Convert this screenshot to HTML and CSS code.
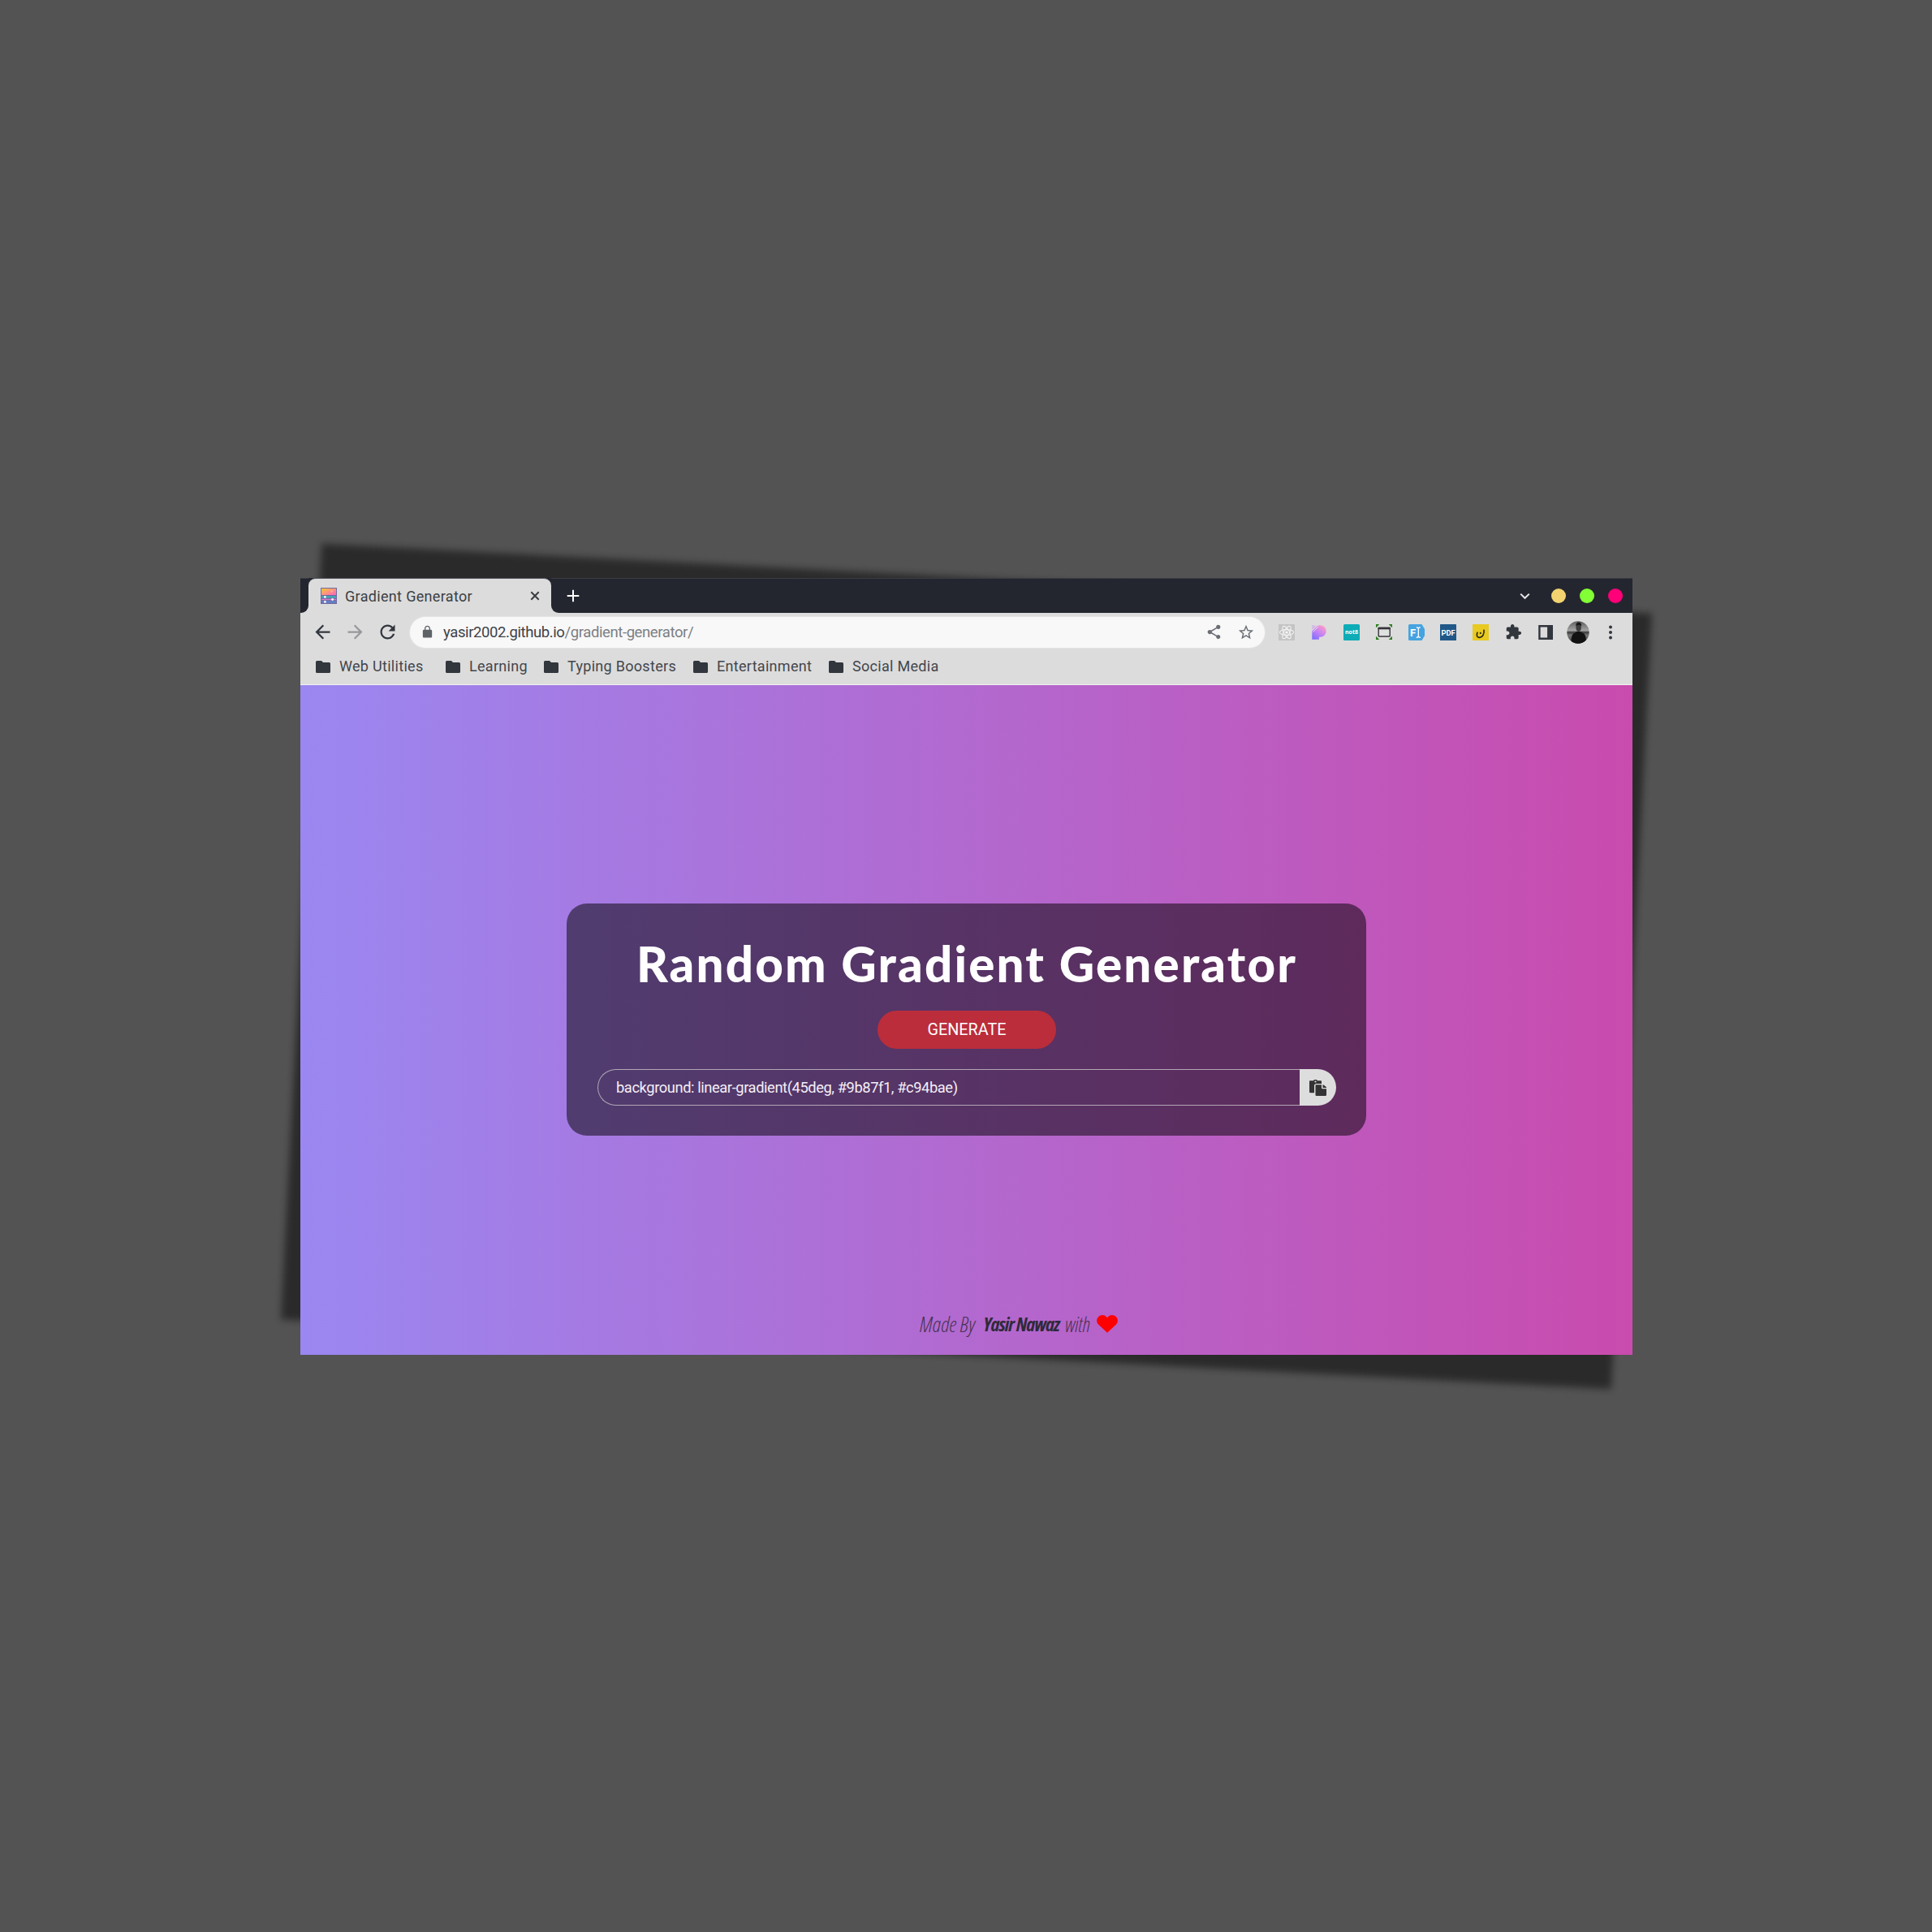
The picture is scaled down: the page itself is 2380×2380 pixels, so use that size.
FILE: index.html
```html
<!DOCTYPE html>
<html lang="en">
<head>
<meta charset="utf-8">
<title>Gradient Generator</title>
<link rel="stylesheet" href="styles.css">
</head>
<body>
<main class="stage">
<div class="frame">
<section class="window">
  <header class="tabstrip">
    <div class="strip-left"></div>
    <div class="tab-slot">
      <div class="tab">
        <svg class="favicon" viewBox="0 0 20 20"><defs><linearGradient id="fav" x1="0" y1="0" x2="1" y2="1"><stop offset="0" stop-color="#fbc72f"/><stop offset=".55" stop-color="#ff8f86"/><stop offset="1" stop-color="#fd62c0"/></linearGradient></defs><rect width="20" height="20" fill="#6f6ba0"/><rect x="1" y="1" width="18" height="8" fill="url(#fav)"/><circle cx="13.6" cy="4.6" r="1" fill="#ffc0b0"/><path d="M1 11.4h18" stroke="#2cc3c0" stroke-width="1.6"/><path d="M1 14.5h18" stroke="#d77bd0" stroke-width="1.4"/><path d="M1 17.5h18" stroke="#5c8ae0" stroke-width="1.6"/><circle cx="5.4" cy="11.4" r="1.4" fill="#fff"/><circle cx="14.6" cy="14.5" r="1.4" fill="#fff"/><circle cx="5.4" cy="17.4" r="1.4" fill="#fff"/></svg>
        <span class="tab-title">Gradient Generator</span>
        <svg class="tab-close" viewBox="0 0 12 12"><path d="M1.3 1.3l9.4 9.4M10.7 1.3l-9.4 9.4" stroke="#3a3d42" stroke-width="2" fill="none"/></svg>
      </div>
    </div>
    <div class="strip-right">
      <svg class="plus" viewBox="0 0 16 16"><path d="M8 .7v14.6M.7 8h14.6" stroke="#fff" stroke-width="2"/></svg>
      <svg class="chevron" viewBox="0 0 14 9"><path d="M1.3 1.4L7 7l5.7-5.6" stroke="#e6e6e8" stroke-width="2.2" fill="none"/></svg>
      <i class="dot yellow"></i><i class="dot green"></i><i class="dot pink"></i>
    </div>
  </header>
  <nav class="toolbar">
    <span class="cell"><svg class="i27 dark" viewBox="0 0 24 24"><path d="M20 11H7.83l5.59-5.59L12 4l-8 8 8 8 1.41-1.41L7.83 13H20v-2z"/></svg></span>
    <span class="cell"><svg class="i27 faded" viewBox="0 0 24 24"><path d="M12 4l-1.41 1.41L16.17 11H4v2h12.17l-5.58 5.59L12 20l8-8z"/></svg></span>
    <span class="cell"><svg class="i27 dark" viewBox="0 0 24 24"><path d="M17.65 6.35C16.2 4.9 14.21 4 12 4c-4.42 0-7.99 3.58-7.99 8s3.57 8 7.99 8c3.73 0 6.84-2.55 7.73-6h-2.08c-.82 2.33-3.04 4-5.65 4-3.31 0-6-2.69-6-6s2.69-6 6-6c1.66 0 3.14.69 4.22 1.78L13 11h7V4l-2.35 2.35z"/></svg></span>
    <div class="omnibox">
      <svg class="lock" viewBox="0 0 24 24"><path d="M18 8h-1V6c0-2.76-2.24-5-5-5S7 3.24 7 6v2H6c-1.1 0-2 .9-2 2v10c0 1.1.9 2 2 2h12c1.1 0 2-.9 2-2V10c0-1.1-.9-2-2-2zM15.1 8H8.9V6c0-1.71 1.39-3.1 3.1-3.1s3.1 1.39 3.1 3.1v2z"/></svg>
      <span class="url">yasir2002.github.io<span class="path">/gradient-generator/</span></span>
      <svg class="share" viewBox="0 0 24 24"><path d="M18 16.08c-.76 0-1.44.3-1.96.77L8.91 12.7c.05-.23.09-.46.09-.7s-.04-.47-.09-.7l7.05-4.11c.54.5 1.25.81 2.04.81 1.66 0 3-1.34 3-3s-1.34-3-3-3-3 1.34-3 3c0 .24.04.47.09.7L8.04 9.81C7.5 9.31 6.79 9 6 9c-1.66 0-3 1.34-3 3s1.34 3 3 3c.79 0 1.5-.31 2.04-.81l7.12 4.16c-.05.21-.08.43-.08.65 0 1.61 1.31 2.92 2.92 2.92s2.92-1.31 2.92-2.92-1.31-2.92-2.92-2.92z"/></svg>
      <svg class="star" viewBox="0 0 24 24"><path d="M22 9.24l-7.19-.62L12 2 9.19 8.63 2 9.24l5.46 4.73L5.82 21 12 17.27 18.18 21l-1.63-7.03L22 9.24zM12 15.4l-3.76 2.27 1-4.28-3.32-2.88 4.38-.38L12 6.1l1.71 4.04 4.38.38-3.32 2.88 1 4.28L12 15.4z"/></svg>
    </div>
    <div class="extensions">
      <span class="cell"><svg class="i20" viewBox="0 0 20 20"><rect width="20" height="20" fill="#c4c4c4"/><g fill="none" stroke="#f2f2f2" stroke-width="1.1"><ellipse cx="10" cy="10" rx="8.6" ry="3.4"/><ellipse cx="10" cy="10" rx="8.6" ry="3.4" transform="rotate(60 10 10)"/><ellipse cx="10" cy="10" rx="8.6" ry="3.4" transform="rotate(120 10 10)"/></g><circle cx="10" cy="10" r="1.6" fill="#fff"/></svg></span>
      <span class="cell"><svg class="i20" viewBox="0 0 20 20"><defs><linearGradient id="pg" x1=".1" y1="1" x2=".8" y2="0"><stop offset="0" stop-color="#7a6cff"/><stop offset=".5" stop-color="#c583f3"/><stop offset="1" stop-color="#ff9dc4"/></linearGradient></defs><path d="M1.3 8.6L8.2 1.7Q9.5 1.3 11 1.3c4.6 0 7.7 3.2 7.7 7.3s-3.1 7.2-7.3 7.2H10V18.7H1.3z" fill="url(#pg)"/><path d="M1.4 5.6L5.4 1.6M1.4 2.6L2.6 1.4" stroke="#c99af0" stroke-width="1.3"/><path d="M2.5 9.5L9 3" stroke="#eadcf5" stroke-width=".9"/></svg></span>
      <span class="cell"><svg class="i20" viewBox="0 0 20 20"><rect width="20" height="20" rx="1.5" fill="#0eacb6"/><text x="10" y="12.4" text-anchor="middle" class="not8">not8</text></svg></span>
      <span class="cell"><svg class="i20" viewBox="0 0 20 20"><path d="M0 0h4.3L0 4.3zM20 0v4.3L15.7 0zM0 19v-4.3L4.3 19zM20 19h-4.3L20 14.7z" fill="#2b7d1d"/><rect x="3.2" y="4.4" width="14" height="10.6" rx=".8" fill="#dfe0e0" stroke="#35353a" stroke-width="1.4"/><path d="M2.5 5h15.4" stroke="#35353a" stroke-width="2.6"/></svg></span>
      <span class="cell"><svg class="i20" viewBox="0 0 20 20"><path d="M1.5 0H16.5L20 6v8l-3.5 6H1.5Q0 20 0 18.5v-17Q0 0 1.5 0z" fill="#45a3e0"/><text x="2" y="14.8" class="fi">F</text><path d="M9.8 3.8q1.600 0 2.500 1 .9-1 2.500-1M9.800 16.300q1.600 0 2.500-1 .9 1 2.500 1M12.300 4.800v10.500" fill="none" stroke="#fff" stroke-width="1.3"/></svg></span>
      <span class="cell"><svg class="i20" viewBox="0 0 20 20"><rect width="20" height="20" rx=".6" fill="#205888"/><text x="10" y="13.6" text-anchor="middle" class="pdf">PDF</text></svg></span>
      <span class="cell"><svg class="i20" viewBox="0 0 20 20"><rect width="20" height="20" fill="#e8ca20"/><path d="M6.2 9.6C4.3 13.5 5.5 16.4 8.4 16.3c4 0 6.5-4.5 5.500-9.700" fill="none" stroke="#2f2a10" stroke-width="1.7"/><path d="M9.7 9.6l1.5 1.4-1.3 1.3-1.4-1.4z" fill="#2f2a10"/></svg></span>
      <span class="cell"><svg class="i22 dark" viewBox="0 0 24 24"><path d="M20.5 11H19V7c0-1.1-.9-2-2-2h-4V3.5C13 2.12 11.88 1 10.5 1S8 2.12 8 3.5V5H4c-1.1 0-1.99.9-1.99 2v3.8H3.5c1.49 0 2.7 1.21 2.7 2.7s-1.21 2.7-2.7 2.7H2V20c0 1.1.9 2 2 2h3.8v-1.5c0-1.49 1.21-2.7 2.7-2.7 1.49 0 2.7 1.21 2.7 2.7V22H17c1.1 0 2-.9 2-2v-4h1.5c1.38 0 2.5-1.12 2.5-2.5S21.88 11 20.5 11z"/></svg></span>
      <span class="cell"><svg class="i20" viewBox="0 0 20 20"><path d="M1.2 1h17.8v18H1.2zM3.6 3.4v13.2h8.5V3.4z" fill="#32363d" fill-rule="evenodd"/></svg></span>
      <span class="cell"><svg class="avatar" viewBox="0 0 28 28"><defs><clipPath id="av"><circle cx="14" cy="14" r="13.7"/></clipPath><linearGradient id="sky" x1="0" y1="0" x2="0" y2="1"><stop offset="0" stop-color="#5c5c5c"/><stop offset=".42" stop-color="#a4a4a4"/><stop offset=".5" stop-color="#3a3a3a"/><stop offset=".62" stop-color="#777"/><stop offset="1" stop-color="#343434"/></linearGradient></defs><g clip-path="url(#av)"><rect width="28" height="28" fill="url(#sky)"/><path d="M5.5 28c0-7 .5-12 4.5-13.5l2.5-1.5h4l3 1.5c4 1.5 4.5 6.5 4.5 13.5z" fill="#121212"/><ellipse cx="14.6" cy="8" rx="3.3" ry="5" fill="#3d3d3d"/><path d="M11.3 6q0-4.5 3.5-4.5T18.2 6q-3-2-6.9 0z" fill="#181818"/></g></svg></span>
      <span class="cell"><svg class="i24 dark" viewBox="0 0 24 24"><circle cx="12" cy="5.5" r="2"/><circle cx="12" cy="12" r="2"/><circle cx="12" cy="18.5" r="2"/></svg></span>
    </div>
  </nav>
  <nav class="bookmarks">
    <span class="bm b1"><svg class="folder" viewBox="0 0 18 15"><path d="M1.5 0H7l2 2h7.5Q18 2 18 3.5v10Q18 15 16.5 15h-15Q0 15 0 13.5v-12Q0 0 1.5 0z"/></svg><span>Web Utilities</span></span>
    <span class="bm b2"><svg class="folder" viewBox="0 0 18 15"><path d="M1.5 0H7l2 2h7.5Q18 2 18 3.5v10Q18 15 16.5 15h-15Q0 15 0 13.5v-12Q0 0 1.5 0z"/></svg><span>Learning</span></span>
    <span class="bm b3"><svg class="folder" viewBox="0 0 18 15"><path d="M1.5 0H7l2 2h7.5Q18 2 18 3.5v10Q18 15 16.5 15h-15Q0 15 0 13.5v-12Q0 0 1.5 0z"/></svg><span>Typing Boosters</span></span>
    <span class="bm b4"><svg class="folder" viewBox="0 0 18 15"><path d="M1.5 0H7l2 2h7.5Q18 2 18 3.5v10Q18 15 16.5 15h-15Q0 15 0 13.5v-12Q0 0 1.5 0z"/></svg><span>Entertainment</span></span>
    <span class="bm"><svg class="folder" viewBox="0 0 18 15"><path d="M1.5 0H7l2 2h7.5Q18 2 18 3.5v10Q18 15 16.5 15h-15Q0 15 0 13.5v-12Q0 0 1.5 0z"/></svg><span>Social Media</span></span>
  </nav>
  <div class="page">
    <div class="card">
      <h1 class="title">Random Gradient Generator</h1>
      <button class="generate">GENERATE</button>
      <div class="output">
        <div class="code">background: linear-gradient(45deg, #9b87f1, #c94bae)</div>
        <button class="copy" aria-label="Copy"><svg viewBox="0 0 448 512" preserveAspectRatio="none"><path d="M128 184c0-30.879 25.122-56 56-56h136V56c0-13.255-10.745-24-24-24h-80.61C204.306 12.89 183.637 0 160 0s-44.306 12.89-55.39 32H24C10.745 32 0 42.745 0 56v336c0 13.255 10.745 24 24 24h104V184zm32-144c13.255 0 24 10.745 24 24s-10.745 24-24 24-24-10.745-24-24 10.745-24 24-24zm184 248h104v200c0 13.255-10.745 24-24 24H184c-13.255 0-24-10.745-24-24V184c0-13.255 10.745-24 24-24h136v104c0 13.2 10.8 24 24 24zm104-38.059V256h-96v-96h6.059a24 24 0 0 1 16.97 7.029l65.941 65.941a24 24 0 0 1 7.03 16.971z"/></svg></button>
      </div>
    </div>
    <footer class="credit">
      <span>Made By</span><strong>Yasir Nawaz</strong><span class="with">with</span>
      <svg class="heart" viewBox="0 0 26 22"><path d="M13 21.8L2 11.5C-.6 8.8-.4 4.5 2 2.2 5-.7 9.5-.5 12 2.2l1 1 1-1C16.500-.5 21-.7 24 2.2c2.4 2.3 2.6 6.6 0 9.3z" fill="#f00"/></svg>
    </footer>
  </div>
</section>
</div>
</main>
</body>
</html>
```
FILE: styles.css
```css
* { box-sizing: border-box; }
body { margin: 0; background: #535353; font-family: Roboto, sans-serif; }
svg { display: block; flex: none; }
button { border: 0; padding: 0; font-family: inherit; }
.stage { height: 2380px; padding: 712px 0 0 370px; overflow: hidden; }
.frame { position: relative; width: 1641px; height: 957px; }
.frame::before { content: ""; position: absolute; inset: 0; background: #2a2a2a; transform: rotate(3deg); filter: blur(5px); }
.window { position: relative; height: 957px; display: flex; flex-direction: column; background: #dcdcdc; }

.tabstrip { display: flex; height: 43px; }
.strip-left { width: 10px; background: #24262f; border-bottom-right-radius: 9px; border-top: 1px solid #3a3b43; }
.tab-slot { width: 299px; background: linear-gradient(#24262f 0 20px, #dcdcdc 20px); }
.tab { height: 43px; display: flex; align-items: center; padding: 0 14px 0 15px; background: #dcdcdc; border-radius: 9px 9px 0 0; border-top: 1px solid #55565c; }
.favicon { width: 20px; height: 20px; }
.tab-title { margin-left: 10px; font-size: 18px; letter-spacing: .33px; color: #3b3e44; white-space: nowrap; }
.tab-close { width: 12px; height: 12px; margin-left: auto; }
.strip-right { flex: 1; display: flex; align-items: center; padding: 0 12px 0 19px; background: #24262f; border-bottom-left-radius: 9px; border-top: 1px solid #3a3b43; }
.plus { width: 16px; height: 16px; }
.chevron { width: 13px; height: 9px; margin: 0 26px 0 auto; }
.dot { width: 18px; height: 18px; border-radius: 50%; }
.dot + .dot { margin-left: 17px; }
.yellow { background: #f2d36f; }
.green { background: #82ff35; }
.pink { background: #ff0078; }

.toolbar { display: flex; align-items: center; height: 48px; padding: 0 7px 1px; }
.cell { width: 40px; display: flex; justify-content: center; }
.i27 { width: 27px; height: 27px; }
.i24 { width: 24px; height: 24px; }
.i22 { width: 21px; height: 21px; }
.i20 { width: 20px; height: 20px; }
.avatar { width: 28px; height: 28px; }
.dark { fill: #32363d; }
.faded { fill: #96989b; }
.omnibox { width: 1053px; height: 38px; margin-left: 8px; padding: 0 12px 0 13px; display: flex; align-items: center; background: #f8f8f8; border-radius: 19px; box-shadow: 0 0 0 1px #e3e3e3; }
.lock { width: 17px; height: 17px; fill: #5f6368; }
.url { margin: 0 auto 0 11px; font-size: 18.5px; letter-spacing: -.4px; color: #3f4247; white-space: nowrap; }
.path { color: #7c7f84; }
.share { width: 21px; height: 21px; margin-right: 18px; fill: #6a6d72; }
.star { width: 22px; height: 22px; fill: #6a6d72; }
.extensions { display: flex; align-items: center; margin-left: 7px; }
.extensions .cell { width: 39.9px; }
.not8 { font: 700 7px "Open Sans", sans-serif; fill: #fff; }
.fi { font: 700 13px Roboto, sans-serif; fill: #fff; }
.pdf { font: 700 9.3px Roboto, sans-serif; fill: #fff; }

.bookmarks { display: flex; align-items: center; height: 41px; padding: 0 0 5px 19px; border-bottom: 1px solid #f2f2f2; font-size: 18px; letter-spacing: .3px; color: #43464c; }
.bm { display: flex; align-items: center; white-space: nowrap; }
.bm span { margin-left: 11px; }
.folder { width: 18px; height: 15px; fill: #32363d; margin-top: 1px; }
.b1 { width: 160px; }
.b2 { width: 121px; }
.b3 { width: 184px; }
.b4 { width: 167px; }

.page { flex: 1; display: flex; flex-direction: column; align-items: center; background: linear-gradient(90deg, #9b87f1, #c94bae); }
.card { width: 985px; height: 286px; margin-top: 269px; padding: 38px 37px 0 38px; display: flex; flex-direction: column; align-items: center; border-radius: 25px; background: rgba(0, 0, 0, .508); }
.title { margin: 0; height: 72px; font: 900 60px/72px Lato, sans-serif; letter-spacing: 2.2px; color: #fff; white-space: nowrap; }
.generate { width: 220px; height: 47px; margin-top: 22px; padding-bottom: 1px; border-radius: 24px; background: #bb2d3b; color: #fff; font-size: 19.8px; }
.output { align-self: stretch; display: flex; height: 45px; margin-top: 25px; }
.code { flex: 1; display: flex; align-items: center; padding-left: 22px; border: 1.5px solid #b3a6b5; border-right: 0; border-radius: 23px 0 0 23px; font-size: 18.3px; letter-spacing: -.4px; color: #f4eef6; white-space: nowrap; }
.copy { width: 45px; display: flex; align-items: center; justify-content: center; padding-right: 1px; background: #ddd; border-radius: 0 23px 23px 0; }
.copy svg { width: 21px; height: 20px; fill: #333; }
.credit { display: flex; align-items: center; margin: auto 0 21px 129px; font: italic 300 26px/34px "Open Sans", sans-serif; font-stretch: 75%; color: #463252; white-space: nowrap; }
.credit strong { font-size: 24px; font-weight: 700; letter-spacing: -1px; color: #2e2a38; margin: 0 7px 0 10px; }
.with { font-size: 25px; }
.heart { width: 26px; height: 22px; margin-left: 8px; }
```
